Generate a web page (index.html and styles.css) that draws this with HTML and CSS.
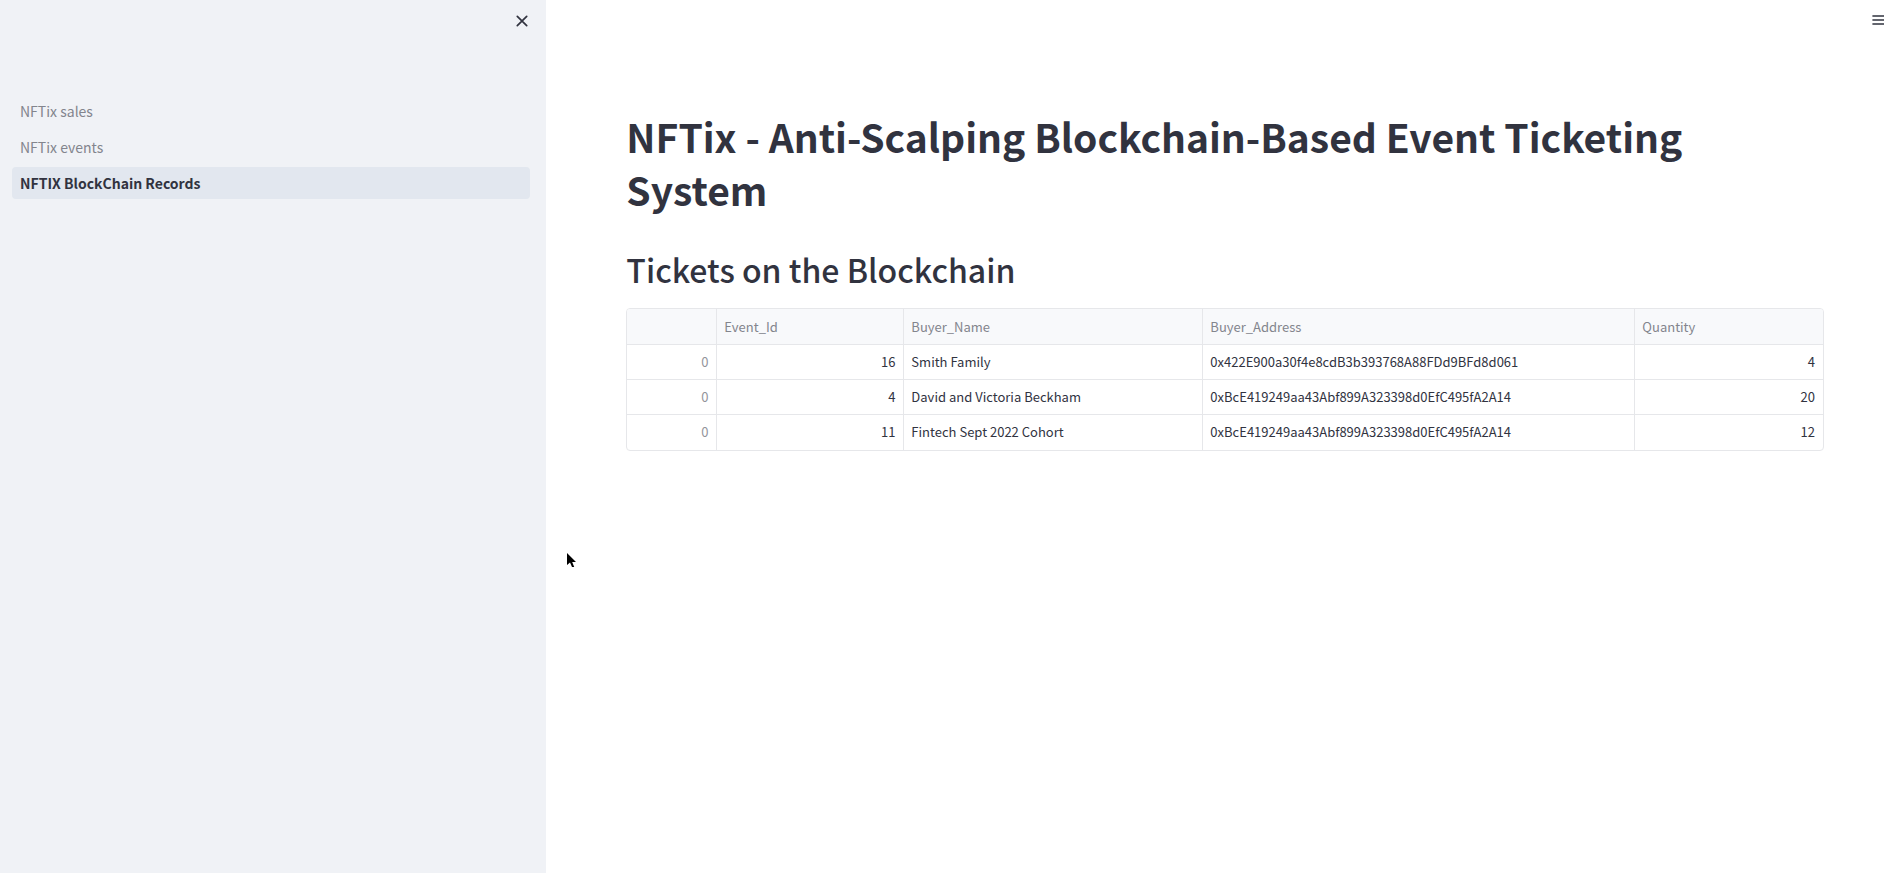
FILE: index.html
```html
<!DOCTYPE html>
<html lang="en">
<head>
<meta charset="utf-8">
<title>NFTix BlockChain Records</title>
<link rel="stylesheet" href="styles.css">
</head>
<body>
<div class="app">
  <aside class="sidebar">
    <div class="sidebar-top">
      <button class="icon-button" type="button" aria-label="Close sidebar">
        <svg width="16" height="20" viewBox="0 0 16 20" fill="none" stroke="currentColor" stroke-width="1.7" stroke-linecap="round"><path d="M3.3 5.3l9.4 9.4M12.7 5.3l-9.4 9.4"/></svg>
      </button>
    </div>
    <nav class="nav">
      <a class="nav-link" href="#">NFTix sales</a>
      <a class="nav-link" href="#">NFTix events</a>
      <a class="nav-link active" href="#" aria-current="page">NFTIX BlockChain Records</a>
    </nav>
  </aside>
  <main class="main">
    <header class="toolbar">
      <button class="icon-button menu-button" type="button" aria-label="Main menu">
        <svg width="12" height="20" viewBox="0 0 12 20" fill="none" stroke="currentColor" stroke-width="1.7"><path d="M0.4 6H12M0.4 10H12M0.4 14H12"/></svg>
      </button>
    </header>
    <div class="content">
      <h1 class="title">NFTix - Anti-Scalping Blockchain-Based Event Ticketing System</h1>
      <h2 class="subtitle">Tickets on the Blockchain</h2>
      <div class="table-frame">
        <table class="records">
          <colgroup><col class="col-index"><col class="col-event"><col class="col-name"><col class="col-address"><col></colgroup>
          <thead>
            <tr><td></td><th scope="col">Event_Id</th><th scope="col">Buyer_Name</th><th scope="col">Buyer_Address</th><th scope="col">Quantity</th></tr>
          </thead>
          <tbody>
            <tr><td class="number index">0</td><td class="number">16</td><td>Smith Family</td><td>0x422E900a30f4e8cdB3b393768A88FDd9BFd8d061</td><td class="number">4</td></tr>
            <tr><td class="number index">0</td><td class="number">4</td><td>David and Victoria Beckham</td><td>0xBcE419249aa43Abf899A323398d0EfC495fA2A14</td><td class="number">20</td></tr>
            <tr><td class="number index">0</td><td class="number">11</td><td>Fintech Sept 2022 Cohort</td><td>0xBcE419249aa43Abf899A323398d0EfC495fA2A14</td><td class="number">12</td></tr>
          </tbody>
        </table>
      </div>
    </div>
  </main>
</div>
<svg class="cursor" width="12" height="18" viewBox="0 0 12 18"><path d="M0 0v12l3-2.6 2 4.6h2.2l-2-5H9z" fill="#000"/></svg>
</body>
</html>
```

FILE: styles.css
```css
* {
  box-sizing: border-box;
}

body {
  margin: 0;
  background: #fff;
  color: #31333f;
  font-family: "Noto Sans CJK SC", "Noto Sans", sans-serif;
  font-size: 14px;
}

.app {
  display: flex;
  min-height: 100vh;
}

.sidebar {
  flex: 0 0 29%;
  padding: 10px 16px 24px 12px;
  background: #f0f2f6;
}

.sidebar-top {
  display: flex;
  justify-content: flex-end;
  height: 85px;
  align-items: flex-start;
}

.icon-button {
  display: flex;
  padding: 0;
  border: 0;
  background: none;
  color: #31333f;
  cursor: pointer;
}

.sidebar-top .icon-button {
  margin-top: 1px;
}

.nav {
  display: flex;
  flex-direction: column;
  gap: 4px;
}

.nav-link {
  padding: 0 8px;
  border-radius: 4px;
  color: #83858d;
  line-height: 32px;
  text-decoration: none;
}

.nav-link.active {
  background: #e2e7ef;
  color: #31333f;
  font-weight: 600;
}

.main {
  flex: 1;
  min-width: 0;
}

.toolbar {
  display: flex;
  justify-content: flex-end;
  height: 96px;
  padding-top: 10px;
  align-items: flex-start;
}

.content {
  padding: 0 60px 80px 80px;
}

.title,
.subtitle {
  margin: 0;
}

.title {
  padding: 14px 0 16px;
  font-size: 39px;
  font-weight: 700;
  line-height: 53px;
}

.subtitle {
  padding: 15px 0 17px;
  font-size: 32px;
  font-weight: 500;
  line-height: 44px;
}

.table-frame {
  overflow: hidden;
  border: 1px solid #e6e7ea;
  border-radius: 4px;
}

.records {
  width: 100%;
  border-collapse: separate;
  border-spacing: 0;
  table-layout: fixed;
  font-size: 13px;
}

.col-index {
  width: 90px;
}

.col-event {
  width: 187px;
}

.col-name {
  width: 299px;
}

.col-address {
  width: 432px;
}

.records th,
.records td {
  height: 35px;
  padding: 0 8px 0 7px;
  border-right: 1px solid #e6e7ea;
  border-bottom: 1px solid #e6e7ea;
  font-weight: 400;
  line-height: 20px;
  text-align: left;
}

.records thead th,
.records thead td {
  height: 36px;
  background: #f8f9fb;
  color: #83858d;
}

.records .number {
  text-align: right;
}

.records .index {
  color: #93949b;
}

.records th:last-child,
.records td:last-child {
  border-right: 0;
}

.records tbody tr:last-child td {
  padding-bottom: 1px;
  border-bottom: 0;
}

.cursor {
  position: absolute;
  top: 553px;
  left: 567px;
  pointer-events: none;
}
```
